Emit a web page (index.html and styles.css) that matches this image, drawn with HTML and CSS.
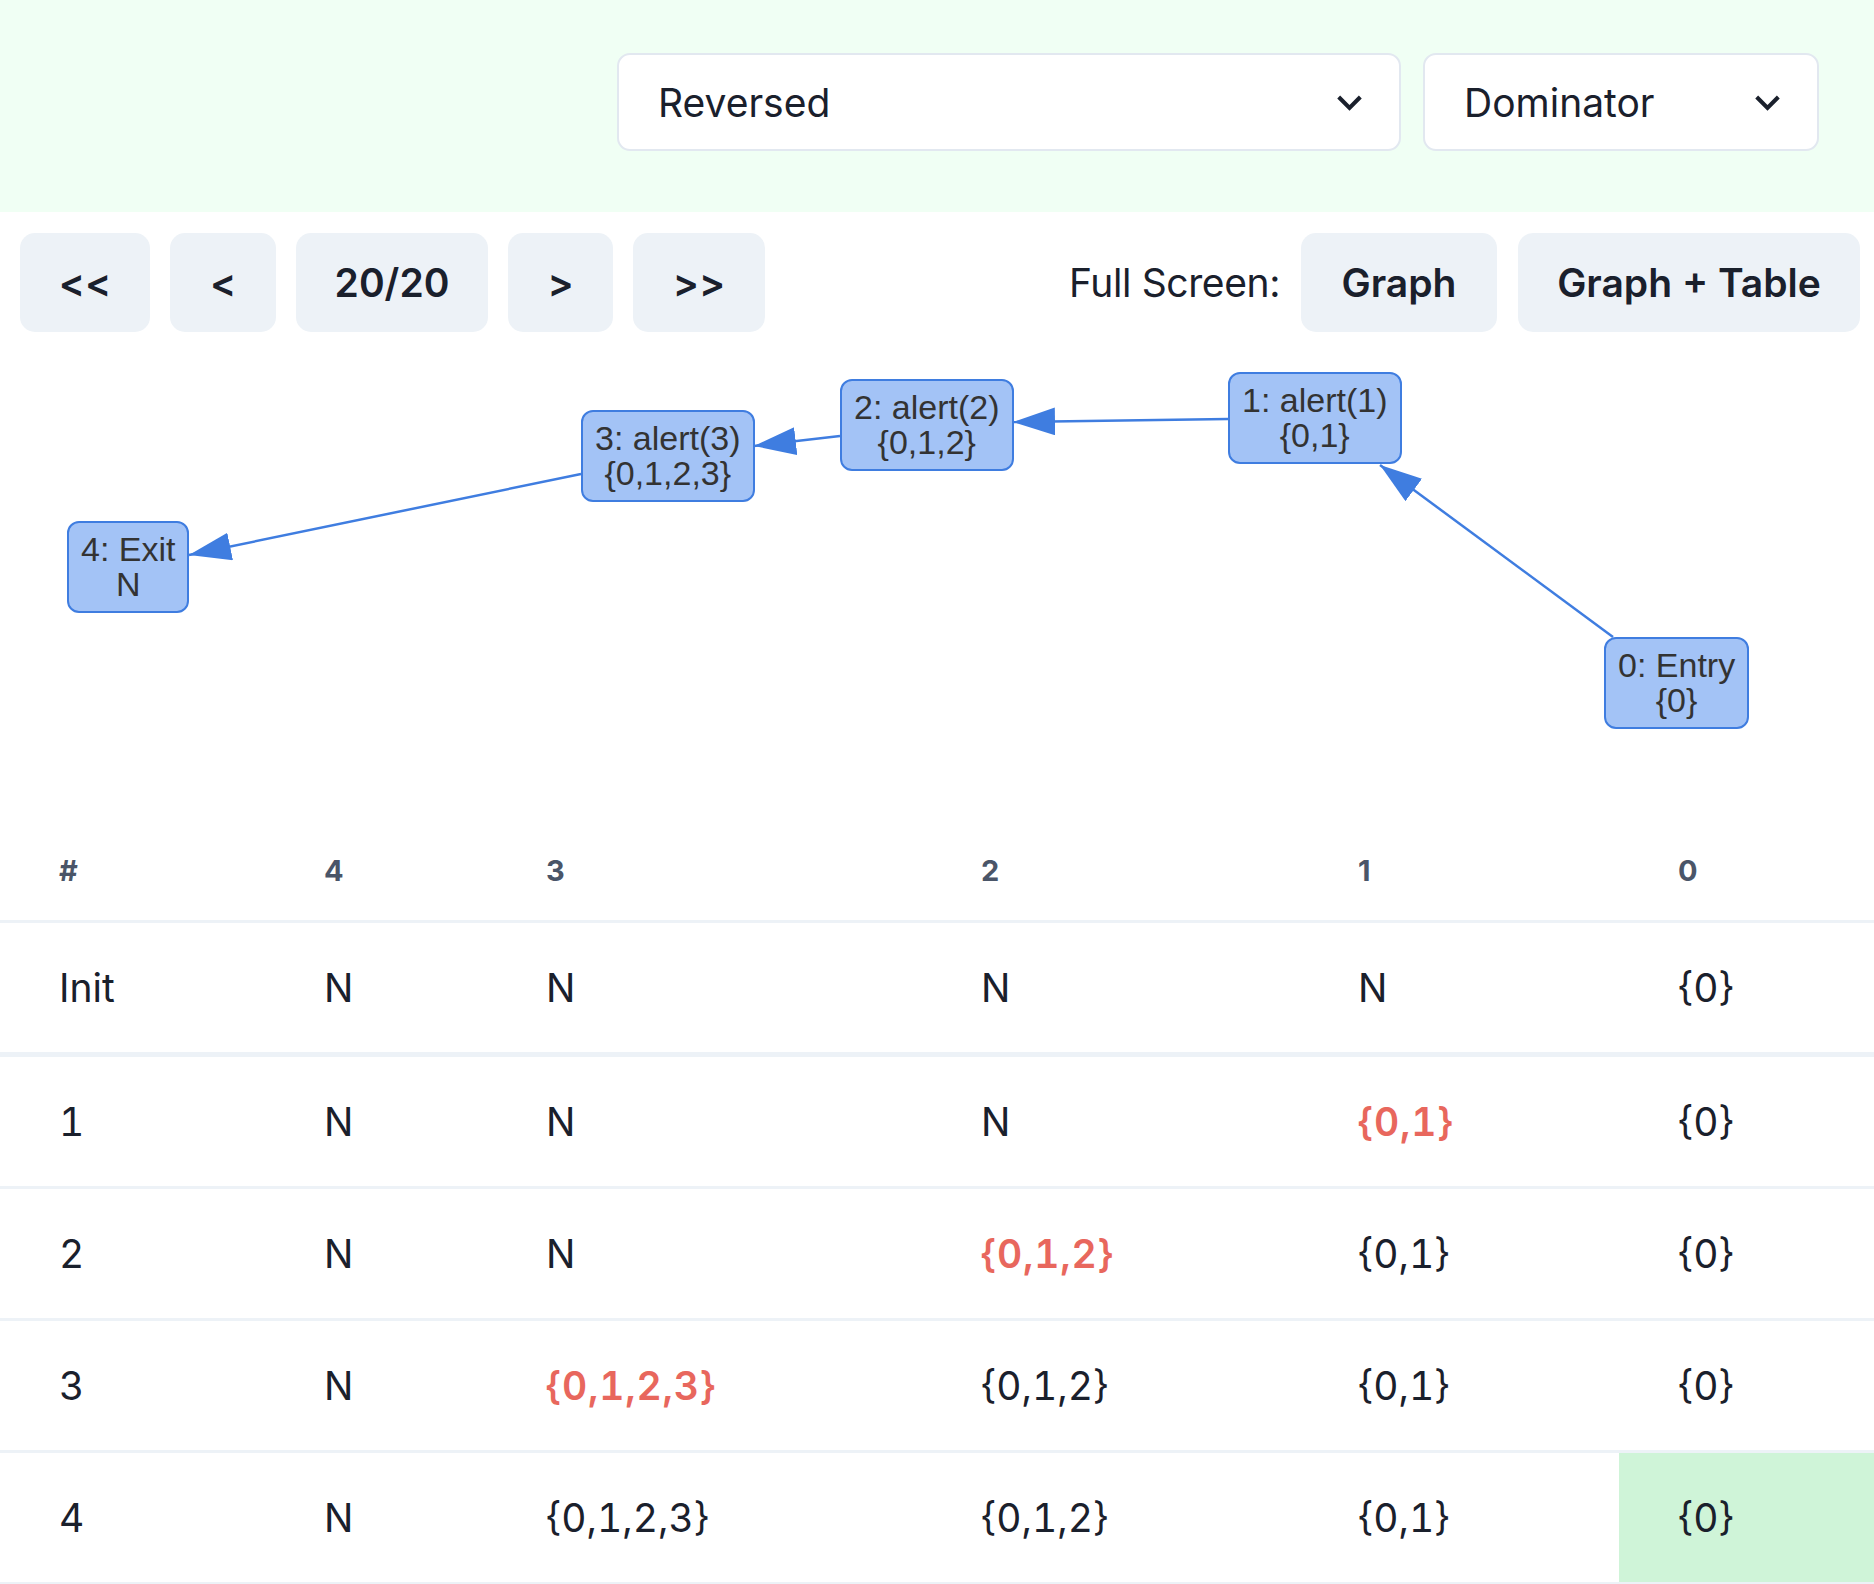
FILE: index.html
```html
<!DOCTYPE html>
<html lang="en">
<head>
<meta charset="utf-8">
<title>Dominator</title>
<link rel="stylesheet" href="styles.css">
</head>
<body>
<header class="topbar">
  <div class="select select-wide">
    <span class="select-value">Reversed</span>
    <svg class="chevron" viewBox="0 0 24 24"><path d="M16.59 8.59L12 13.17 7.41 8.59 6 10l6 6 6-6z"/></svg>
  </div>
  <div class="select select-narrow">
    <span class="select-value">Dominator</span>
    <svg class="chevron" viewBox="0 0 24 24"><path d="M16.59 8.59L12 13.17 7.41 8.59 6 10l6 6 6-6z"/></svg>
  </div>
</header>

<nav class="toolbar">
  <div class="stepper">
    <button class="btn btn-first">&lt;&lt;</button>
    <button class="btn btn-prev">&lt;</button>
    <button class="btn btn-count">20/20</button>
    <button class="btn btn-next">&gt;</button>
    <button class="btn btn-last">&gt;&gt;</button>
  </div>
  <div class="fullscreen">
    <span class="fs-label">Full Screen:</span>
    <button class="btn btn-graph">Graph</button>
    <button class="btn btn-graph-table">Graph + Table</button>
  </div>
</nav>

<section class="graph">
  <svg class="edges" width="1874" height="488" viewBox="0 0 1874 488">
    <defs>
      <marker id="arrow" markerUnits="userSpaceOnUse" markerWidth="42" markerHeight="28" refX="42" refY="14" orient="auto">
        <path d="M0,0 L42,14 L0,28 z" fill="#3f7de0"/>
      </marker>
    </defs>
    <line x1="1228" y1="87" x2="1013" y2="90" class="edge" marker-end="url(#arrow)"/>
    <line x1="840" y1="104" x2="754" y2="114" class="edge" marker-end="url(#arrow)"/>
    <line x1="581" y1="142" x2="189" y2="223" class="edge" marker-end="url(#arrow)"/>
    <line x1="1613" y1="305" x2="1380" y2="133" class="edge" marker-end="url(#arrow)"/>
  </svg>
  <div class="node" style="left:1228px;top:40px">1: alert(1)<br>{0,1}</div>
  <div class="node" style="left:840px;top:47px">2: alert(2)<br>{0,1,2}</div>
  <div class="node" style="left:581px;top:78px">3: alert(3)<br>{0,1,2,3}</div>
  <div class="node" style="left:67px;top:189px">4: Exit<br>N</div>
  <div class="node" style="left:1604px;top:305px">0: Entry<br>{0}</div>
</section>

<table class="table">
  <colgroup>
    <col class="c-step"><col class="c4"><col class="c3"><col class="c2"><col class="c1"><col class="c0">
  </colgroup>
  <thead>
    <tr><th>#</th><th>4</th><th>3</th><th>2</th><th>1</th><th>0</th></tr>
  </thead>
  <tbody>
    <tr class="row-init"><td>Init</td><td>N</td><td>N</td><td>N</td><td>N</td><td>{0}</td></tr>
    <tr><td>1</td><td>N</td><td>N</td><td>N</td><td class="changed">{0,1}</td><td>{0}</td></tr>
    <tr><td>2</td><td>N</td><td>N</td><td class="changed">{0,1,2}</td><td>{0,1}</td><td>{0}</td></tr>
    <tr><td>3</td><td>N</td><td class="changed">{0,1,2,3}</td><td>{0,1,2}</td><td>{0,1}</td><td>{0}</td></tr>
    <tr><td>4</td><td>N</td><td>{0,1,2,3}</td><td>{0,1,2}</td><td>{0,1}</td><td class="final">{0}</td></tr>
  </tbody>
</table>
</body>
</html>
```

FILE: styles.css
```css
* { box-sizing: border-box; }

html, body {
  margin: 0;
  padding: 0;
  background: #ffffff;
  overflow: hidden;
}

body {
  font-family: Inter, "Noto Sans", "DejaVu Sans", sans-serif;
  color: #1a202c;
  width: 1874px;
}

.topbar {
  background: #f0fff4;
  height: 212px;
  display: flex;
  justify-content: flex-end;
  align-items: flex-start;
  gap: 22px;
  padding: 53px 55px 0 0;
}

.select {
  height: 98px;
  background: #ffffff;
  border: 2px solid #e2e8f0;
  border-radius: 13px;
  display: flex;
  align-items: center;
  justify-content: space-between;
  padding: 0 20px 0 39px;
  font-size: 39px;
  color: #1a202c;
}

.select-wide { width: 784px; }
.select-narrow { width: 396px; }

.chevron {
  width: 59px;
  height: 49px;
  fill: #1a202c;
}

.toolbar {
  display: flex;
  justify-content: space-between;
  align-items: center;
  margin-top: 20px;
  padding: 0 14px 0 20px;
  height: 100px;
}

.stepper, .fullscreen {
  display: flex;
  align-items: center;
  gap: 20px;
}

.fullscreen { gap: 21px; }

.btn {
  height: 99px;
  border: none;
  border-radius: 15px;
  background: #edf2f7;
  color: #1a202c;
  font-family: Inter, "Noto Sans", sans-serif;
  font-size: 39px;
  font-weight: 600;
  padding: 0;
  cursor: pointer;
}

.btn-first { width: 130px; }
.btn-prev { width: 106px; }
.btn-count { width: 192px; }
.btn-next { width: 105px; }
.btn-last { width: 132px; }
.btn-graph { width: 196px; }
.btn-graph-table { width: 342px; }

.fs-label {
  font-size: 39px;
  color: #1a202c;
  letter-spacing: -0.01em;
}

.graph {
  position: relative;
  height: 488px;
}

.edges {
  position: absolute;
  left: 0;
  top: 0;
}

.edge {
  stroke: #3f7de0;
  stroke-width: 2.5;
}

.node {
  position: absolute;
  background: #a3c3f6;
  border: 2px solid #3f7de0;
  border-radius: 12px;
  padding: 9px 12px;
  font-family: "Liberation Sans", Arial, sans-serif;
  font-size: 34px;
  line-height: 35px;
  color: #333333;
  text-align: center;
  white-space: nowrap;
}

.table {
  border-collapse: collapse;
  table-layout: fixed;
  width: 1874px;
}

.c-step { width: 265px; }
.c4 { width: 222px; }
.c3 { width: 435px; }
.c2 { width: 377px; }
.c1 { width: 320px; }
.c0 { width: 255px; }

.table th {
  text-align: left;
  font-size: 29px;
  line-height: 39px;
  font-weight: 700;
  color: #4a5568;
  letter-spacing: 0.05em;
  padding: 31px 59px 30px 59px;
  border-bottom: 3px solid #edf2f7;
}

.table td {
  text-align: left;
  font-size: 39px;
  line-height: 51px;
  padding: 39px 59px;
  border-bottom: 3px solid #edf2f7;
  white-space: nowrap;
  font-variant-numeric: tabular-nums;
}

.table .row-init td {
  border-bottom: 5px solid #edf2f7;
}

.table td.changed {
  color: #e8675d;
  font-weight: 600;
  letter-spacing: 0.02em;
}

.table td.final {
  background: #cff4d8;
}
```
